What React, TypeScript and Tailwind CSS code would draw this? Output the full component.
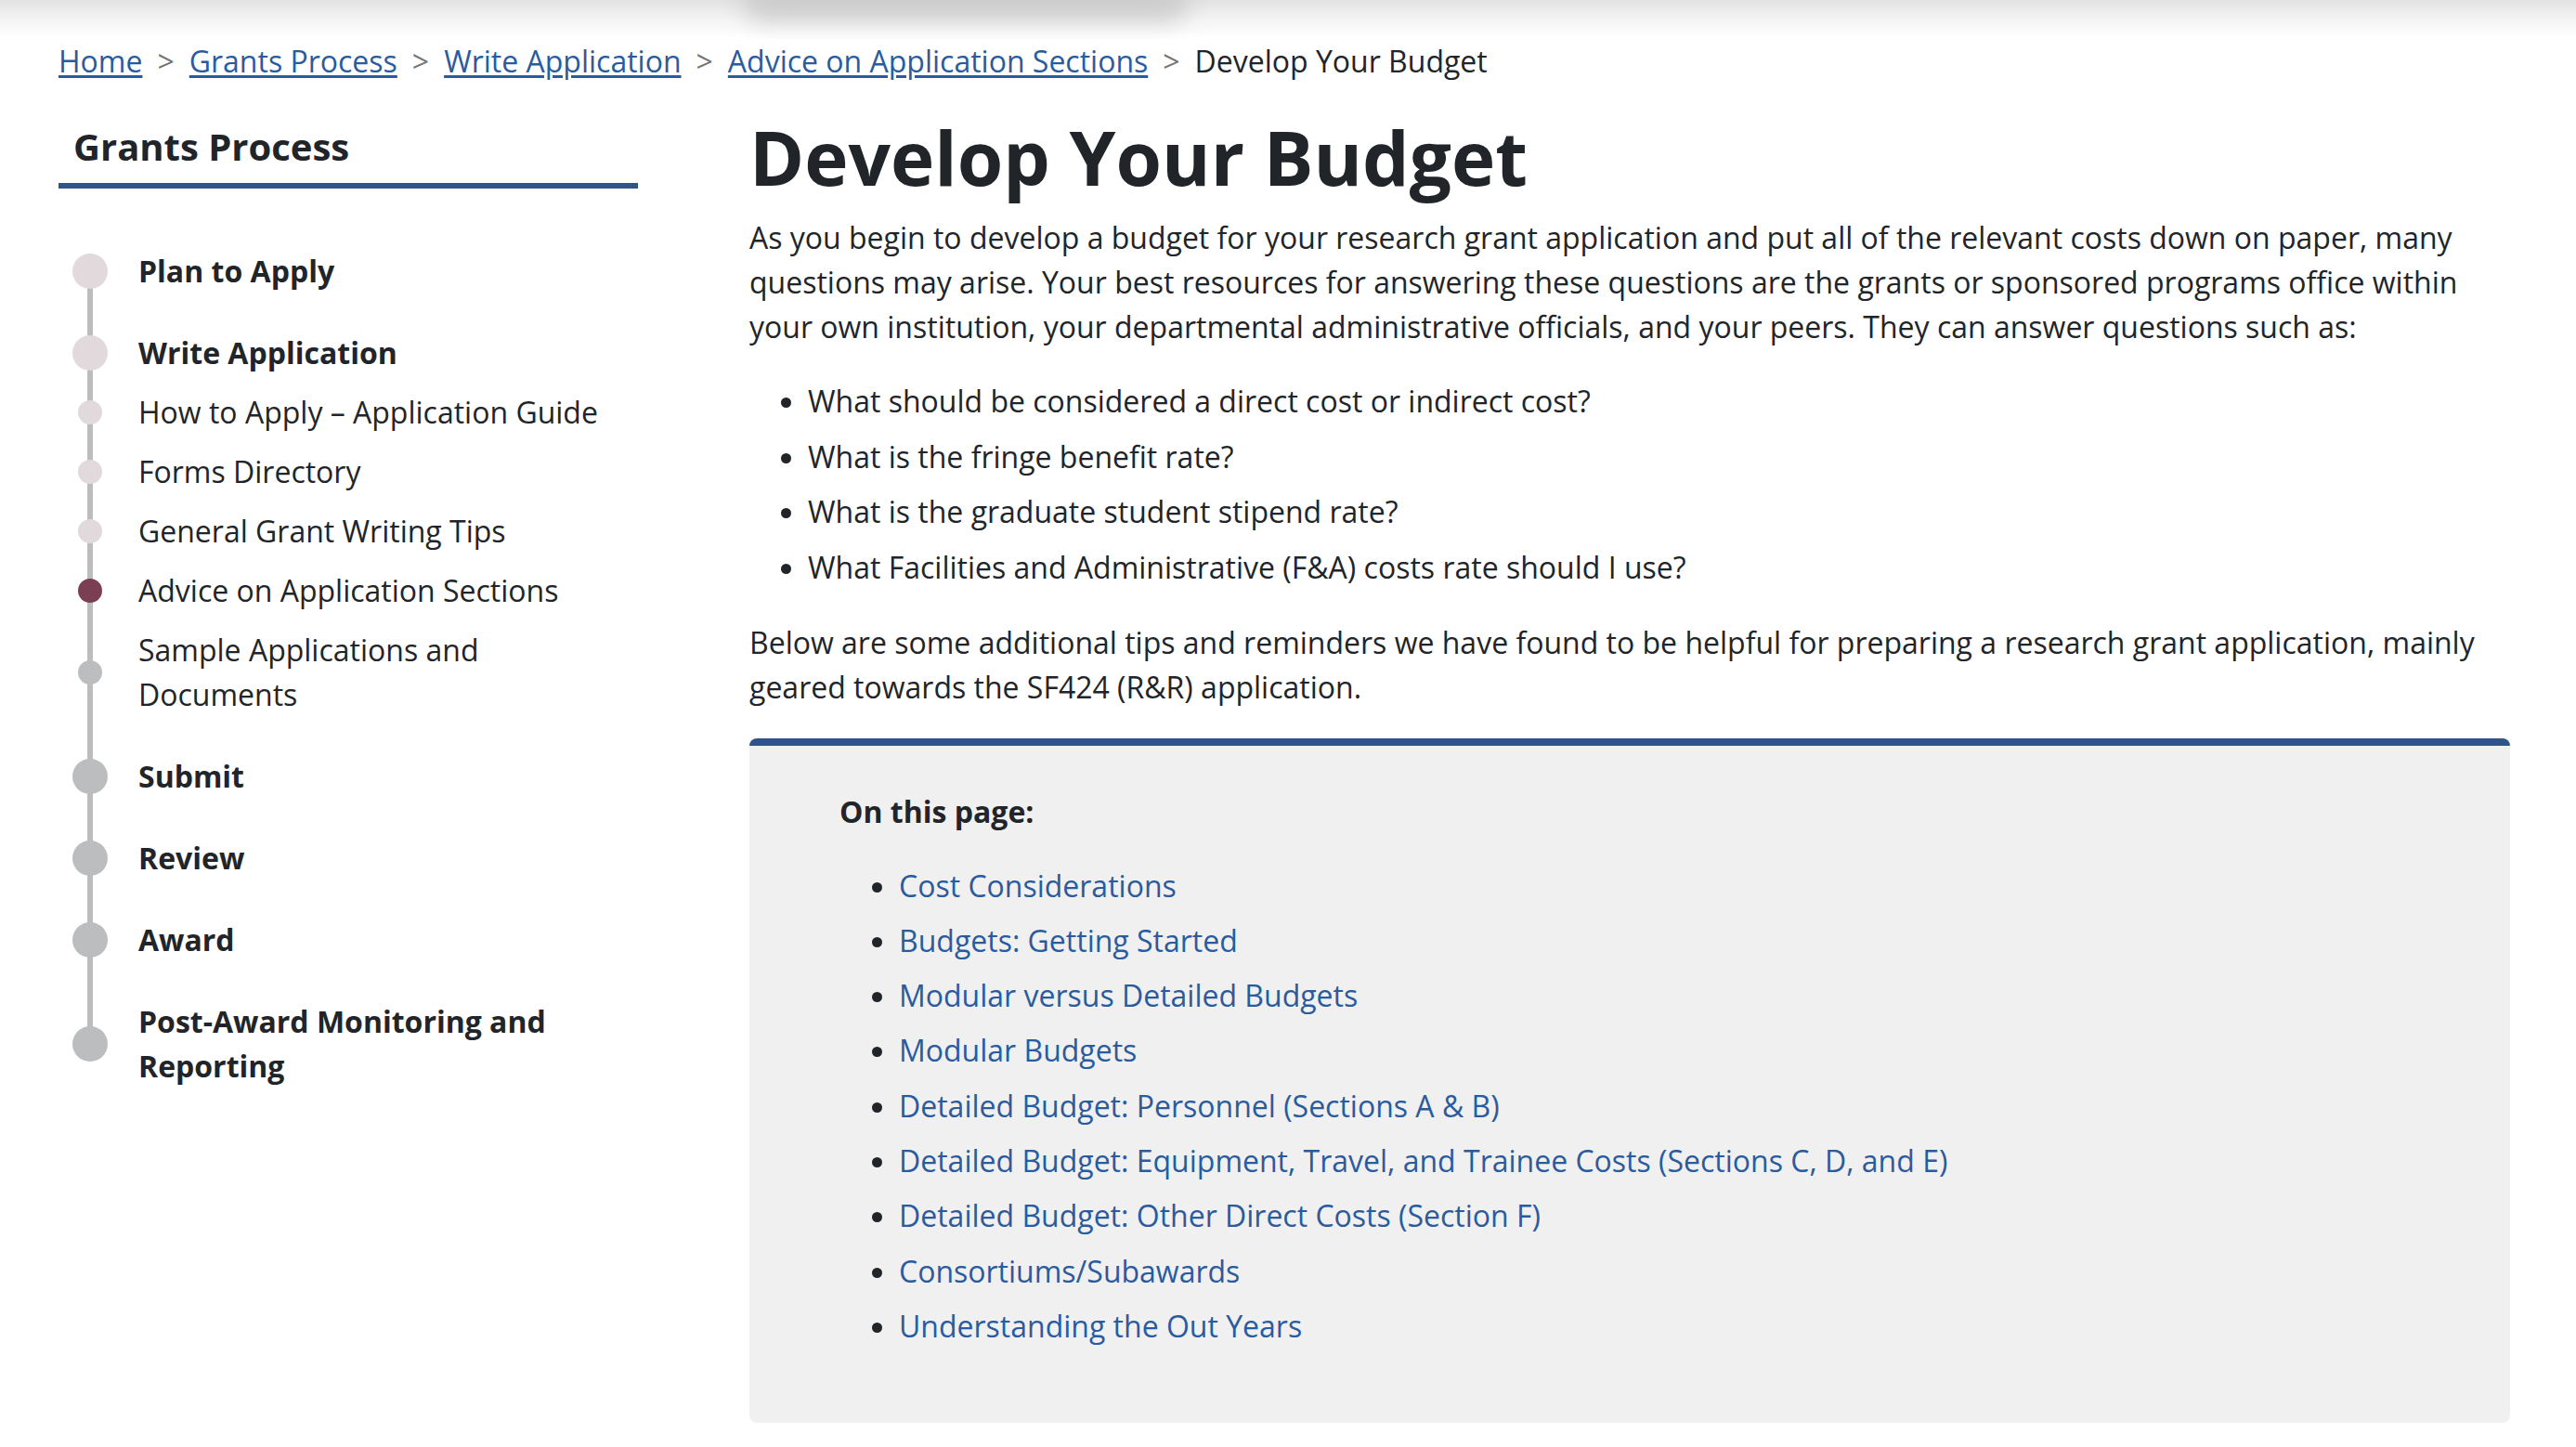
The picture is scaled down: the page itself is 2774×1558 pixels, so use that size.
import React from "react";

type Dot = "doneBig" | "doneSmall" | "current" | "futureSmall" | "futureBig";

type NavItem = {
  label: string;
  dot: Dot;
  bold?: boolean;
  children?: NavItem[];
};

const nav: NavItem[] = [
  { label: "Plan to Apply", dot: "doneBig", bold: true },
  {
    label: "Write Application",
    dot: "doneBig",
    bold: true,
    children: [
      { label: "How to Apply – Application Guide", dot: "doneSmall" },
      { label: "Forms Directory", dot: "doneSmall" },
      { label: "General Grant Writing Tips", dot: "doneSmall" },
      { label: "Advice on Application Sections", dot: "current" },
      { label: "Sample Applications and Documents", dot: "futureSmall" },
    ],
  },
  { label: "Submit", dot: "futureBig", bold: true },
  { label: "Review", dot: "futureBig", bold: true },
  { label: "Award", dot: "futureBig", bold: true },
  { label: "Post-Award Monitoring and Reporting", dot: "futureBig", bold: true },
];

const dotClass: Record<Dot, string> = {
  doneBig: "h-[38px] w-[38px] bg-[#e2d9dd]",
  doneSmall: "h-[26px] w-[26px] bg-[#e2d9dd]",
  current: "h-[26px] w-[26px] bg-[#7b3f53]",
  futureSmall: "h-[26px] w-[26px] bg-[#bcbdbf]",
  futureBig: "h-[38px] w-[38px] bg-[#bcbdbf]",
};

const crumbs = ["Home", "Grants Process", "Write Application", "Advice on Application Sections"];

const questions = [
  "What should be considered a direct cost or indirect cost?",
  "What is the fringe benefit rate?",
  "What is the graduate student stipend rate?",
  "What Facilities and Administrative (F&A) costs rate should I use?",
];

const onThisPage = [
  "Cost Considerations",
  "Budgets: Getting Started",
  "Modular versus Detailed Budgets",
  "Modular Budgets",
  "Detailed Budget: Personnel (Sections A & B)",
  "Detailed Budget: Equipment, Travel, and Trainee Costs (Sections C, D, and E)",
  "Detailed Budget: Other Direct Costs (Section F)",
  "Consortiums/Subawards",
  "Understanding the Out Years",
];

function NavRow({ item }: { item: NavItem }) {
  return (
    <div className="flex items-center">
      <div className="flex w-[68px] shrink-0 justify-center">
        <span className={`relative block rounded-full ${dotClass[item.dot]}`} />
      </div>
      <a className={`pl-[18px] leading-[48px] ${item.bold ? "font-bold" : "font-normal"}`}>{item.label}</a>
    </div>
  );
}

export default function App() {
  return (
    <div className="min-h-screen bg-white font-['Open_Sans',sans-serif] text-[32px] text-[#212529]">
      {/* shadow from the sticky header above */}
      <div className="relative h-[42px] overflow-hidden bg-gradient-to-b from-[#e2e2e2] via-[#f4f4f4] to-white">
        <div className="absolute -top-[24px] left-[800px] h-[46px] w-[480px] rounded-full bg-[#cdcdcd] blur-[12px]" />
      </div>

      <div className="pl-[63px] pr-[71px]">
        <nav className="flex items-center leading-[48px]">
          {crumbs.map((c) => (
            <React.Fragment key={c}>
              <a className="text-[#2a5b9f] underline decoration-[3px] underline-offset-[3px]">{c}</a>
              <span className="mx-[16px] text-[#757575]">&gt;</span>
            </React.Fragment>
          ))}
          <span>Develop Your Budget</span>
        </nav>

        <div className="mt-[31px] flex gap-[120px]">
          <aside className="w-[624px] shrink-0">
            <h2 className="border-b-[6px] border-[#30548a] pb-[15px] pl-[16px] pt-[13px] text-[40px] font-bold leading-[48px]">
              Grants Process
            </h2>
            <ul className="relative mt-[65px]">
              <div className="absolute bottom-[48px] left-[31px] top-[24px] w-[6px] bg-[#bcbdbf]" />
              {nav.map((item, i) => (
                <li key={item.label} className={i === 0 ? "" : "mt-[40px]"}>
                  <NavRow item={item} />
                  {item.children && (
                    <ul>
                      {item.children.map((child) => (
                        <li key={child.label} className="mt-[16px]">
                          <NavRow item={child} />
                        </li>
                      ))}
                    </ul>
                  )}
                </li>
              ))}
            </ul>
          </aside>

          <main className="min-w-0 flex-1">
            <h1 className="mb-[15px] text-[80px] font-bold leading-[96px]">Develop Your Budget</h1>
            <p className="mb-[32px] leading-[48px]">
              As you begin to develop a budget for your research grant application and put all of the relevant costs down
              on paper, many questions may arise. Your best resources for answering these questions are the grants or
              sponsored programs office within your own institution, your departmental administrative officials, and your
              peers. They can answer questions such as:
            </p>
            <ul className="mb-[33px] list-disc pl-[63px]">
              {questions.map((q) => (
                <li key={q} className="mb-[11.5px] leading-[48px]">
                  {q}
                </li>
              ))}
            </ul>
            <p className="mb-[31px] leading-[48px]">
              Below are some additional tips and reminders we have found to be helpful for preparing a research grant
              application, mainly geared towards the SF424 (R&amp;R) application.
            </p>

            <section className="rounded-[8px] border-t-[8px] border-[#30548a] bg-[#f0f0f0] pb-[69px] pl-[97px] pr-[48px] pt-[47px]">
              <div className="font-bold leading-[48px]">On this page:</div>
              <ul className="mt-[32px] list-disc pl-[64px]">
                {onThisPage.map((l) => (
                  <li key={l} className="mb-[11.3px] leading-[48px]">
                    <a className="text-[#2a5b9f]">{l}</a>
                  </li>
                ))}
              </ul>
            </section>
          </main>
        </div>
      </div>
    </div>
  );
}
